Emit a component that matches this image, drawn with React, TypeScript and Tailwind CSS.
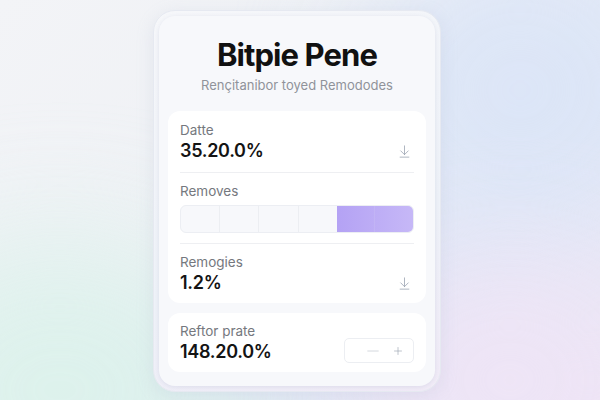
import { ArrowDownToLine, Minus, Plus } from "lucide-react";

const font = { fontFamily: '"Inter", "Liberation Sans", sans-serif' };

function DownloadIcon() {
    return <ArrowDownToLine className="size-[15px] text-gray-400" strokeWidth={1.25} />;
}

export default function App() {
    return (
        <div
            className="w-[600px] h-[400px] flex items-start pl-[153px] pt-[10px] bg-[linear-gradient(135deg,#f3f4f7_0%,#eff1f5_40%,#e3e9f6_70%,#ece6f5_100%)] relative overflow-hidden"
            style={font}
        >
            {/* soft colour washes */}
            <div className="absolute left-[-120px] bottom-[-140px] w-[360px] h-[300px] rounded-full bg-[#d9f2ea] blur-3xl opacity-80" />
            <div className="absolute right-[-80px] top-[-60px] w-[320px] h-[300px] rounded-full bg-[#dbe5f7] blur-3xl opacity-90" />
            <div className="absolute right-[-60px] bottom-[-100px] w-[300px] h-[240px] rounded-full bg-[#efe4f6] blur-3xl opacity-90" />

            {/* outer frame */}
            <div className="relative w-[288px] h-[382px] p-[5px] rounded-[22px] bg-[linear-gradient(160deg,#f6f7fa,#eef2f8_60%,#f1ebf7)] border border-[#e6e9f1] shadow-[0_4px_18px_rgba(150,160,190,0.16)]">
                <div className="h-full rounded-[16px] bg-[#f7f8fb] shadow-[0_1px_4px_rgba(150,160,190,0.22)] flex flex-col px-[9px]">
                    <div className="flex flex-col items-center pt-[20px]">
                        <h1 className="text-[31px] leading-[38px] font-bold text-[#111111] tracking-[-0.9px]">
                            Bitpie Pene
                        </h1>
                        <p className="mt-[2px] text-[13px] leading-[18px] text-[#90939a]">
                            Rençitanibor toyed Remododes
                        </p>
                    </div>

                    <div className="mt-[17px] rounded-[12px] bg-white px-[12px] pt-[10px] pb-[10px] flex flex-col">
                        <div className="flex items-end justify-between pb-[11px] border-b border-[#eeeff2]">
                            <div className="flex flex-col">
                                <span className="text-[13.5px] leading-[18px] text-[#75787e]">Datte</span>
                                <span className="mt-[2px] text-[18px] leading-[20px] font-semibold tracking-[-0.3px] text-[#141414]">35.20.0%</span>
                            </div>
                            <div className="pb-[2px] pr-[2px]">
                                <DownloadIcon />
                            </div>
                        </div>

                        <div className="pt-[9px] pb-[10px] border-b border-[#eeeff2]">
                            <span className="block text-[13.5px] leading-[18px] text-[#75787e]">Removes</span>
                            <div className="mt-[5px] h-[28px] rounded-[6px] border border-[#eceef3] bg-[#f7f8fb] flex overflow-hidden">
                                <div className="flex-1 border-r border-[#eceef2]" />
                                <div className="flex-1 border-r border-[#eceef2]" />
                                <div className="flex-1 border-r border-[#eceef2]" />
                                <div className="flex-1" />
                                <div className="flex-[2] bg-[linear-gradient(90deg,#b4a2f4,#c6b8f7)] flex">
                                    <div className="flex-1 border-r border-[#c2b4f5]" />
                                    <div className="flex-1" />
                                </div>
                            </div>
                        </div>

                        <div className="flex items-end justify-between pt-[9px]">
                            <div className="flex flex-col">
                                <span className="text-[13.5px] leading-[18px] text-[#75787e]">Remogies</span>
                                <span className="mt-[2px] text-[18px] leading-[20px] font-semibold tracking-[-0.3px] text-[#141414]">1.2%</span>
                            </div>
                            <div className="pb-[2px] pr-[2px]">
                                <DownloadIcon />
                            </div>
                        </div>
                    </div>

                    <div className="mt-[10px] rounded-[12px] bg-white px-[12px] pt-[9px] pb-[10px] flex items-end justify-between">
                        <div className="flex flex-col">
                            <span className="text-[13.5px] leading-[18px] text-[#75787e]">Reftor prate</span>
                            <span className="mt-[2px] text-[18px] leading-[20px] font-semibold tracking-[-0.3px] text-[#141414]">148.20.0%</span>
                        </div>
                        <div className="mb-[-1px] w-[70px] h-[25px] rounded-[5px] border border-[#eceef2] flex items-center justify-end gap-[10px] pr-[9px]">
                            <Minus className="size-[18px] text-gray-300" strokeWidth={1.25} />
                            <Plus className="size-[12px] text-gray-400" strokeWidth={1.25} />
                        </div>
                    </div>
                </div>
            </div>
        </div>
    );
}
